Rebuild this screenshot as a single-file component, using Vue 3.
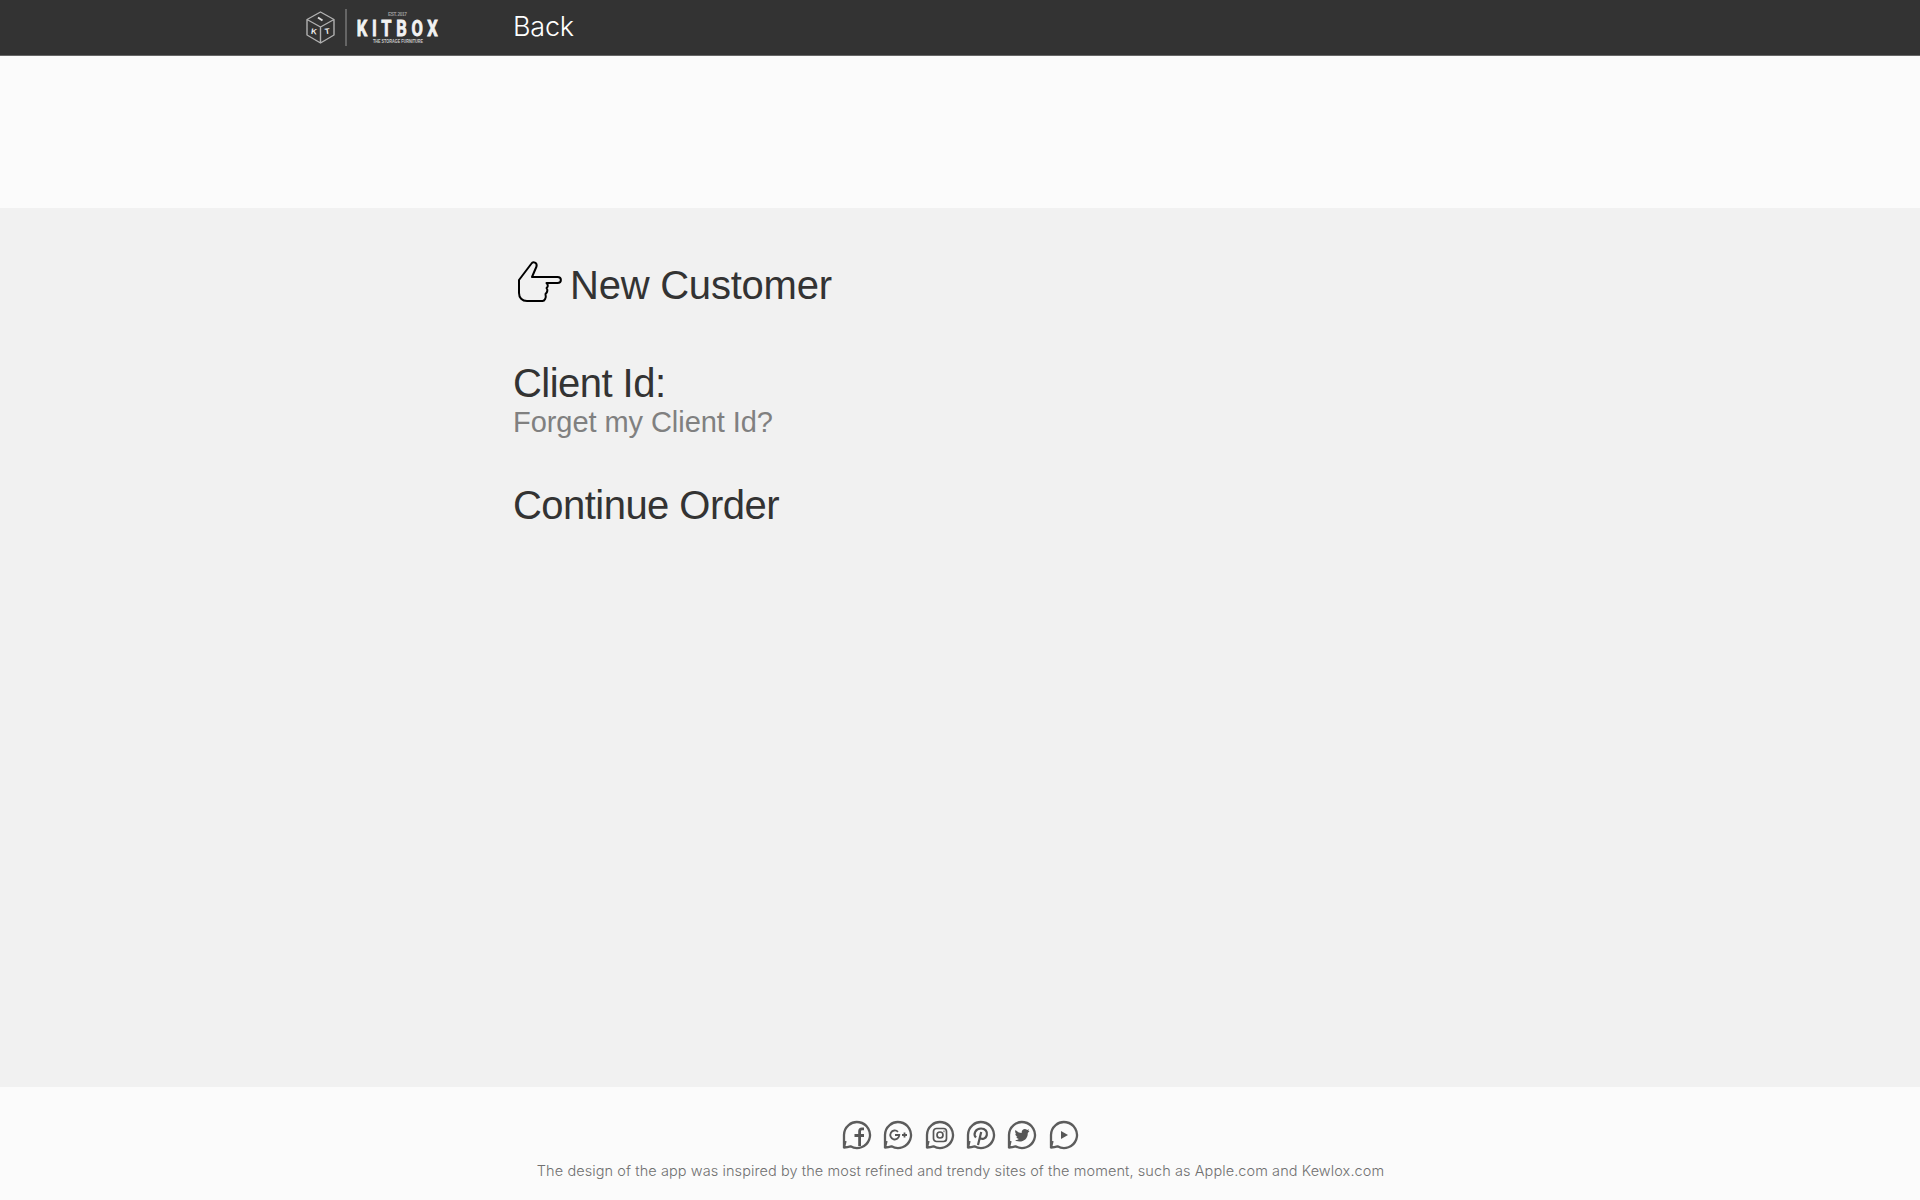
<script setup>
const socials = ['facebook', 'google', 'instagram', 'pinterest', 'twitter', 'youtube']
</script>

<template>
  <div class="page">
    <header class="bar">
      <svg class="logo" width="136" height="40" viewBox="0 0 136 40">
        <g fill="none" stroke="#b0b0b0" stroke-width="1.4" stroke-linejoin="round">
          <path d="M15.5 5 29 12.5V28L15.5 36 2 28V12.5ZM2 12.5 15.5 20 29 12.5M15.5 20V36" />
        </g>
        <path d="M41 2V39" stroke="#777" stroke-width="1.5" />
        <g fill="#f2f2f2" font-family="'Liberation Sans', sans-serif" font-weight="700">
          <text x="6" y="27" font-size="8" transform="rotate(8 8 25)">K</text>
          <text x="20" y="27" font-size="8" transform="rotate(-8 22 25)">T</text>
          <path d="M13 10.5 17.5 13.5" stroke="#ddd" stroke-width="2" />
          <text font-size="22" textLength="108" font-family="Roboto, sans-serif" stroke="#f2f2f2" stroke-width=".8" transform="translate(51.8 28.5) scale(.75 1)">KITBOX</text>
          <text x="83" y="8.7" font-size="4.8" textLength="19" fill="#999">EST. 2017</text>
          <text x="68" y="36.3" font-size="4.8" textLength="50" lengthAdjust="spacingAndGlyphs" fill="#ccc">THE STORAGE FURNITURE</text>
        </g>
      </svg>
      <a class="back">Back</a>
    </header>
    <main class="content">
      <div class="new-row">
        <svg class="hand" width="46" height="43" viewBox="0 0 46 43" fill="none" stroke="#000" stroke-width="2" stroke-linejoin="round" stroke-linecap="round">
          <path d="M2 20 14.5 3.5C16 1 20.5 2.5 19.5 6.5L15 17H40.5C45 17 45 23 40.5 23H29.5C31.5 25 31 27 29.5 28 31 30 30.5 32 28.5 34 29.5 38 27.5 41 25.5 41H10C5 41 2 37.5 2 33Z" />
        </svg>
        <h1 class="new">New Customer</h1>
      </div>
      <h1 class="client">Client Id:</h1>
      <p class="forget">Forget my Client Id?</p>
      <h1 class="order">Continue Order</h1>
    </main>
    <footer class="foot">
      <div class="socials">
        <svg v-for="name in socials" :key="name" width="30" height="30" viewBox="0 0 30 30">
          <path d="M2 28V15A13 13 0 1 1 8.5 26.3Q5.5 27.3 2 27.5L3.5 21" fill="none" stroke="#5c5c5c" stroke-width="2.3" stroke-linejoin="round" />
          <path v-if="name === 'facebook'" d="M22 8.8H20Q17.6 8.8 17.6 11.3V26M12.5 15.5H22" fill="none" stroke="#565656" stroke-width="2.8" />
          <g v-else-if="name === 'google'" fill="none" stroke="#565656" stroke-width="1.8">
            <path d="M15 11.8A4.5 4.5 0 1 0 16.3 15H12M19 15H24M21.5 12.5V17.5" />
          </g>
          <g v-else-if="name === 'instagram'" fill="none" stroke="#565656" stroke-width="1.7">
            <rect x="8.5" y="8.5" width="13" height="13" rx="3" />
            <circle cx="15" cy="15" r="3" />
            <path d="M18.5 11.3H19.5" />
          </g>
          <path v-else-if="name === 'pinterest'" d="M10 17.5C6.8 14 9.5 8.5 15 8.5 19.5 8.5 21.5 11.5 20.8 15 20 19 15.5 20 14 17.5M15.2 12 12 25" fill="none" stroke="#565656" stroke-width="2.2" />
          <path v-else-if="name === 'twitter'" d="M8.5 10Q11.5 13 14.7 13C14.2 9.2 18 7.8 20.2 10L22 9.3 21.3 11 22.5 11 20.8 13C21 20.5 13.5 23.5 8 20.3Q10.5 20.3 11.8 19 9.8 18.5 9.3 16.8H10.5Q8.3 15.8 8.2 13.8L9.2 14Q7.5 12 8.5 10Z" fill="#565656" />
          <path v-else d="M12 11 19 15 12 19Z" fill="#565656" />
        </svg>
      </div>
      <p class="note">The design of the app was inspired by the most refined and trendy sites of the moment, such as Apple.com and Kewlox.com</p>
    </footer>
  </div>
</template>

<style>
body {
  margin: 0;
  background: #fbfbfb;
}
</style>

<style scoped>
.page {
  display: flex;
  flex-direction: column;
  height: 1200px;
  overflow: hidden;
  background: #fbfbfb;
  font-family: 'Liberation Sans', Arial, sans-serif;
}
.bar {
  box-sizing: border-box;
  display: flex;
  height: 56px;
  flex: none;
  padding: 7px 0 0 305px;
  background: #333;
  border-bottom: 1px solid #666;
}
.back {
  margin-left: 72px;
  color: #fff;
  font: 300 27px/40px Inter, sans-serif;
  letter-spacing: -0.2px;
}
.content {
  box-sizing: border-box;
  height: 879px;
  flex: none;
  margin-top: 152px;
  padding: 50px 0 0 513px;
  background: #f1f1f1;
  color: #333;
}
.new-row {
  display: flex;
  height: 54px;
}
.hand {
  margin: 2px 7px 0 4px;
}
h1 {
  margin: 0;
  font-size: 40px;
  font-weight: 400;
  line-height: 54px;
  letter-spacing: -0.54px;
}
.new {
  letter-spacing: -0.23px;
}
.client {
  margin-top: 44px;
}
.forget {
  margin: -3px 0 0;
  color: #808080;
  font-size: 29px;
  line-height: 30px;
  letter-spacing: -0.06px;
}
.order {
  margin-top: 41px;
}
.foot {
  display: flex;
  flex-direction: column;
  align-items: center;
  padding-top: 33px;
}
.socials {
  display: flex;
  gap: 11.4px;
  padding-left: 0.5px;
}
.note {
  margin: 10px 0 0;
  padding-left: 1px;
  color: #707070;
  font: 300 14.5px/22px Inter, sans-serif;
  letter-spacing: 0.085px;
  white-space: nowrap;
}
</style>
